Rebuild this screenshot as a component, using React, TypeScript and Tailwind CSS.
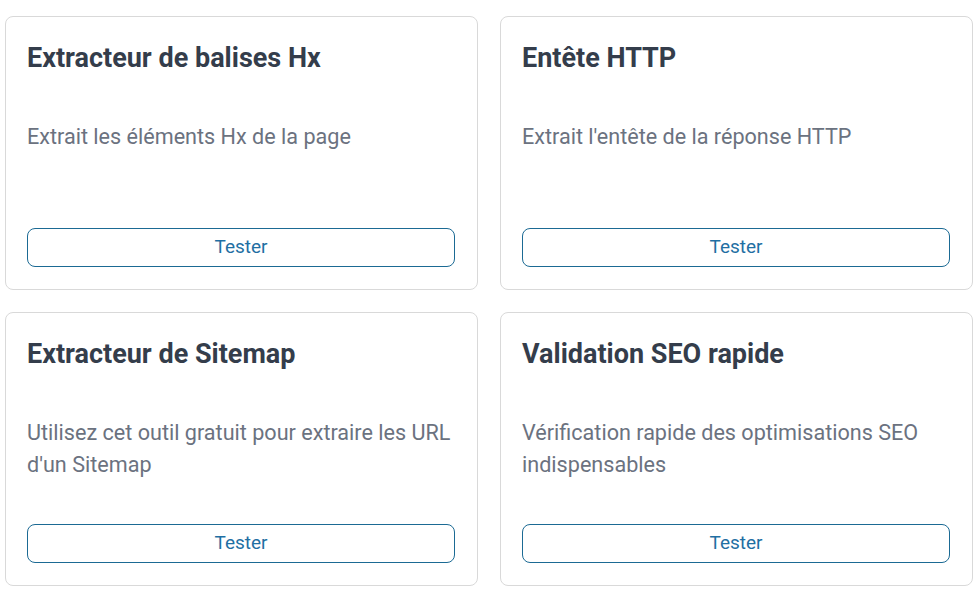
const tools = [
  {
    title: "Extracteur de balises Hx",
    description: "Extrait les éléments Hx de la page",
  },
  {
    title: "Entête HTTP",
    description: "Extrait l'entête de la réponse HTTP",
  },
  {
    title: "Extracteur de Sitemap",
    description: "Utilisez cet outil gratuit pour extraire les URL d'un Sitemap",
  },
  {
    title: "Validation SEO rapide",
    description: "Vérification rapide des optimisations SEO indispensables",
  },
];

function ToolCard({ title, description }: { title: string; description: string }) {
  return (
    <div className="flex h-[274px] flex-col rounded-lg border border-[#d9d9d9] bg-white pb-[22px] pl-[21px] pr-[22px] pt-[22px]">
      <h3 className="text-[27px] font-bold leading-[38px] text-[#343d4b]">{title}</h3>
      <p className="mt-[44px] text-[21.6px] leading-[32px] text-[#6b7280]">{description}</p>
      <button className="mt-auto h-[39px] w-full rounded-lg border border-[#1b6a94] text-[19px] text-[#1f6fa3]">
        Tester
      </button>
    </div>
  );
}

export default function App() {
  return (
    <div
      className="min-h-screen bg-white px-[5px] pt-[16px]"
      style={{ fontFamily: "Roboto, 'Liberation Sans', sans-serif" }}
    >
      <div className="grid w-[968px] grid-cols-2 gap-x-[22px] gap-y-[22px]">
        {tools.map((t) => (
          <ToolCard key={t.title} {...t} />
        ))}
      </div>
    </div>
  );
}
